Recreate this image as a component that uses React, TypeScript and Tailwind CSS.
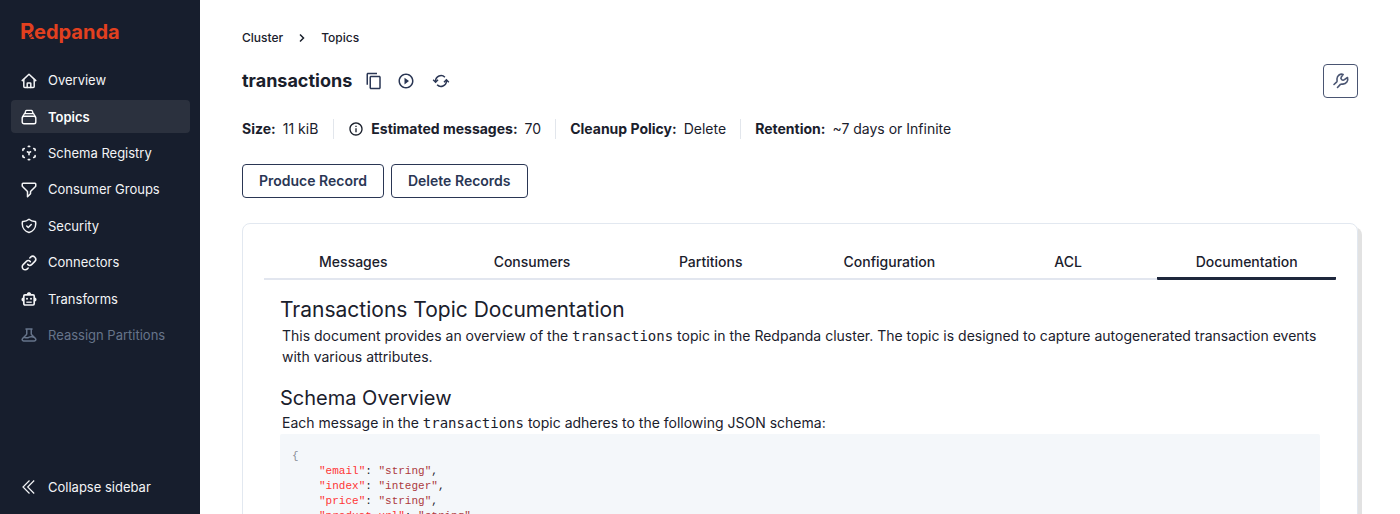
import type { ReactNode } from 'react';
import { HiOutlineFilter, HiOutlineShieldCheck, HiOutlineLink, HiOutlineBeaker } from 'react-icons/hi';
import { MdContentCopy, MdInfoOutline, MdPlayCircleOutline } from 'react-icons/md';

function HomeIcon() {
  return (
    <svg viewBox="0 0 16 16" className="size-4" fill="none" stroke="currentColor" strokeWidth="1.5" strokeLinecap="round" strokeLinejoin="round" aria-hidden="true">
      <path d="M1.200 7.600 8 1.300l6.800 6.300" />
      <path d="M2.800 6.600v7c0 .6.400 1 1 1h8.400c.6 0 1-.4 1-1v-7" />
      <path d="M6.200 14.400v-4c0-.3.200-.5.500-.5h2.600c.3 0 .5.200.5.500v4" />
    </svg>
  );
}

function TopicsIcon() {
  return (
    <svg viewBox="0 0 16 16" className="size-4" fill="none" stroke="currentColor" strokeWidth="1.4" strokeLinecap="round" strokeLinejoin="round" aria-hidden="true">
      <rect x="1.2" y="7.2" width="13.6" height="7.6" rx="1.8" />
      <path d="M1.8 7.6 3 5.2a1 1 0 0 1 .9-.6h8.2a1 1 0 0 1 .9.6l1.2 2.4" />
      <path d="M4 4.4 4.600 2.200a1 1 0 0 1 .9-.8h5a1 1 0 0 1 .9.8L12 4.400" />
    </svg>
  );
}

function SchemaIcon() {
  return (
    <svg viewBox="0 0 16 16" className="size-4" fill="none" stroke="currentColor" strokeWidth="1.600" strokeLinecap="round" strokeLinejoin="round" aria-hidden="true">
      <path d="M7.300 1.500 8 1.200l.7.300M3.300 3.500l-1.400.8v1.200M12.700 3.500l1.400.8v1.200M1.900 10.500v1.200l1.400.8M14.100 10.500v1.200l-1.400.8M7.300 14.500l.7.300.7-.3" />
      <path d="M6.400 6.800l1.600.9 1.600-.9M8 7.900v1.900" />
    </svg>
  );
}

function RobotIcon() {
  return (
    <svg viewBox="0 0 16 16" className="size-4" fill="none" stroke="currentColor" aria-hidden="true">
      <rect x="2.800" y="3.800" width="10.400" height="10.200" rx="1.200" strokeWidth="1.700" />
      <path d="M5.800 3.200C6 1.800 6.800 1.200 8 1.200s2 .6 2.200 2zM2.200 6.500C1 6.700.5 7.400.5 8.500s.5 1.800 1.700 2zM13.800 6.500c1.200.2 1.700.9 1.700 2s-.5 1.800-1.700 2z" fill="currentColor" stroke="none" />
      <path d="M5.300 11.200h5.400" strokeWidth="1.300" />
      <circle cx="6" cy="7.800" r="1" fill="currentColor" stroke="none" />
      <circle cx="10" cy="7.800" r="1" fill="currentColor" stroke="none" />
    </svg>
  );
}

function CollapseIcon() {
  return (
    <svg viewBox="0 0 16 16" className="size-4" fill="none" stroke="currentColor" strokeWidth="1.200" aria-hidden="true">
      <path d="M8.500 1.500 2 8l6.500 6.500M13.200 1.500 6.700 8l6.500 6.500" />
    </svg>
  );
}

function SyncIcon() {
  return (
    <svg viewBox="0 0 18 18" className="size-[18px]" fill="none" stroke="currentColor" strokeWidth="1.500" aria-hidden="true">
      <path d="M3.600 9.500V9a5.400 5.400 0 0 1 9.300-3.700M14.400 8.500V9a5.400 5.400 0 0 1-9.300 3.700" />
      <path d="m1.200 7.800 2.400 2.400L6 7.800M12 10.200l2.400-2.400 2.400 2.400" />
    </svg>
  );
}

function WrenchIcon() {
  return (
    <svg viewBox="0 0 18 18" className="size-[18px]" fill="none" stroke="currentColor" strokeWidth="1.600" strokeLinecap="round" strokeLinejoin="round" aria-hidden="true">
      <path d="M2 12.500 4.800 9.800C5.400 9.100 4.900 8 5 6.800 5.200 3.600 8.200 1.400 11.200 2.400L9.300 5c-.6.9-.4 2 .4 2.700.8.600 1.900.600 2.700 0L15.500 5.500c1.100 3.400-1.300 6.400-4.600 6.600-1 .1-1.900-.2-2.500.3L5.500 15.500" />
    </svg>
  );
}

function Logo() {
  return (
    <svg viewBox="0 0 104 36" className="h-9 w-[104px]" role="img" aria-label="Redpanda">
      <text x="0" y="25" className="fill-[#e2401f] font-['Inter'] text-[22px] font-bold">
        R<tspan x="14" className="text-[20px]">edpanda</tspan>
      </text>
      <path d="m7 22.500 4.500-3.500M9 25l4.500-3.500" stroke="#171e2d" strokeWidth="0.900" />
    </svg>
  );
}

const navItems: { label: string; icon: ReactNode; state?: 'active' | 'disabled' }[] = [
  { label: 'Overview', icon: <HomeIcon /> },
  { label: 'Topics', icon: <TopicsIcon />, state: 'active' },
  { label: 'Schema Registry', icon: <SchemaIcon /> },
  { label: 'Consumer Groups', icon: <HiOutlineFilter className="size-[18px]" /> },
  { label: 'Security', icon: <HiOutlineShieldCheck className="size-[18px]" /> },
  { label: 'Connectors', icon: <HiOutlineLink className="size-[18px]" /> },
  { label: 'Transforms', icon: <RobotIcon /> },
  { label: 'Reassign Partitions', icon: <HiOutlineBeaker className="size-[18px]" />, state: 'disabled' },
];

const navStyles = {
  active: 'bg-[#2b313e] font-semibold text-white',
  disabled: 'text-[#66748a]',
  normal: 'text-[#f3f4f6]',
};

function Sidebar() {
  return (
    <aside className="flex w-[200px] shrink-0 flex-col bg-[#171e2d] pr-[10px] pl-[11px] text-[13px]">
      <a href="#home" className="mt-[14px] ml-[9px] block">
        <Logo />
      </a>
      <nav className="mt-[14px] flex h-[288px] flex-col justify-between">
        {navItems.map((item) => (
          <a
            key={item.label}
            href="#nav"
            className={`flex h-[33px] items-center gap-[10px] rounded px-[9px] ${navStyles[item.state ?? 'normal']}`}
          >
            <span className="flex w-[18px] justify-center">{item.icon}</span>
            {item.label}
          </a>
        ))}
      </nav>
      <button type="button" className="mt-auto mb-[11px] flex h-8 items-center gap-[10px] px-[9px] text-[#f3f4f6]">
        <span className="flex w-[18px] justify-center"><CollapseIcon /></span>
        Collapse sidebar
      </button>
    </aside>
  );
}

function Stat({ label, value, icon }: { label: string; value: string; icon?: ReactNode }) {
  return (
    <div className="flex h-5 items-center gap-[7px] border-l border-[#e2e6ec] px-[14px] first:border-l-0 first:pr-[15px] first:pl-0">
      {icon}
      <dt className="font-bold">{label}:</dt>
      <dd>{value}</dd>
    </div>
  );
}

const tabs = ['Messages', 'Consumers', 'Partitions', 'Configuration', 'ACL', 'Documentation'];

const fields = [
  ['email', 'string'],
  ['index', 'integer'],
  ['price', 'string'],
  ['product_url', 'string'],
];

function CodeWord({ children }: { children: ReactNode }) {
  return <code className="font-['DejaVu_Sans_Mono',monospace] text-[14px] leading-none">{children}</code>;
}

export default function App() {
  return (
    <div className="flex h-screen overflow-hidden bg-white font-['Inter',sans-serif] text-sm text-[#1a202c]">
      <Sidebar />
      <main className="min-w-0 flex-1 px-[42px] pt-7">
        <nav aria-label="Breadcrumb" className="flex h-5 items-center gap-[14px] text-[12px] font-medium">
          <a href="#cluster">Cluster</a>
          <svg viewBox="0 0 10 10" className="size-[10px]" fill="none" stroke="currentColor" strokeWidth="1.500" aria-hidden="true">
            <path d="m3 1.500 3.500 3.500L3 8.500" />
          </svg>
          <a href="#topics">Topics</a>
        </nav>

        <div className="mt-4 flex h-[34px] items-center text-[#2a3654]">
          <h1 className="mr-[13px] text-lg font-bold text-[#1a202c]">transactions</h1>
          <button type="button" aria-label="Copy name" className="mr-[14px]"><MdContentCopy className="size-[18px]" /></button>
          <button type="button" aria-label="Play" className="mr-[17px]"><MdPlayCircleOutline className="size-[18px]" /></button>
          <button type="button" aria-label="Refresh"><SyncIcon /></button>
          <button type="button" aria-label="Settings" className="ml-auto flex h-[34px] w-[35px] items-center justify-center rounded border border-[#4a5572] text-[#4a5572]">
            <WrenchIcon />
          </button>
        </div>

        <dl className="mt-[21px] flex">
          <Stat label="Size" value="11 kiB" />
          <Stat label="Estimated messages" value="70" icon={<MdInfoOutline className="size-4" />} />
          <Stat label="Cleanup Policy" value="Delete" />
          <Stat label="Retention" value="~7 days or Infinite" />
        </dl>

        <div className="mt-[25px] flex gap-[7px] font-semibold text-[#2a3654]">
          <button type="button" className="h-[34px] rounded border border-[#2a3654] px-4">Produce Record</button>
          <button type="button" className="h-[34px] rounded border border-[#2a3654] px-4">Delete Records</button>
        </div>

        <section className="mt-[25px] rounded-lg border border-[#e2e8f0] px-[21px] pt-[21px] pb-8 shadow-[4px_4px_0_0_#e2e2e2]">
          <div role="tablist" className="flex border-b-2 border-[#e2e6ef] font-medium">
            {tabs.map((tab) => (
              <button
                key={tab}
                type="button"
                role="tab"
                aria-selected={tab === 'Documentation'}
                className="-mb-[2px] h-[35px] flex-1 rounded-[1px] border-b-3 border-transparent pt-[2px] aria-selected:border-[#1e273c]"
              >
                {tab}
              </button>
            ))}
          </div>
          <article className="px-4 pt-4">
            <h2 className="text-[21px] leading-7">Transactions Topic Documentation</h2>
            <p className="mt-px pl-[2px] leading-[21px]">
              This document provides an overview of the <CodeWord>transactions</CodeWord> topic in the Redpanda cluster. The topic is designed to capture autogenerated transaction events with various attributes.
            </p>
            <h2 className="mt-[17px] text-[20px] leading-7">Schema Overview</h2>
            <p className="pl-[2px] leading-[21px]">
              Each message in the <CodeWord>transactions</CodeWord> topic adheres to the following JSON schema:
            </p>
            <pre className="mt-px rounded-xs bg-[#f4f7fa] px-3 pt-[15px] pb-4 font-['Liberation_Mono',monospace] text-[11px] leading-[15px]">
              <span className="text-[#8a8f98]">{'{'}</span>
              {fields.map(([key, type]) => (
                <div key={key} className="pl-[27px]">
                  <span className="text-[#ff3535]">"{key}"</span>: <span className="text-[#ac3a40]">"{type}"</span>,
                </div>
              ))}
              <span className="text-[#8a8f98]">{'}'}</span>
            </pre>
          </article>
        </section>
      </main>
    </div>
  );
}
